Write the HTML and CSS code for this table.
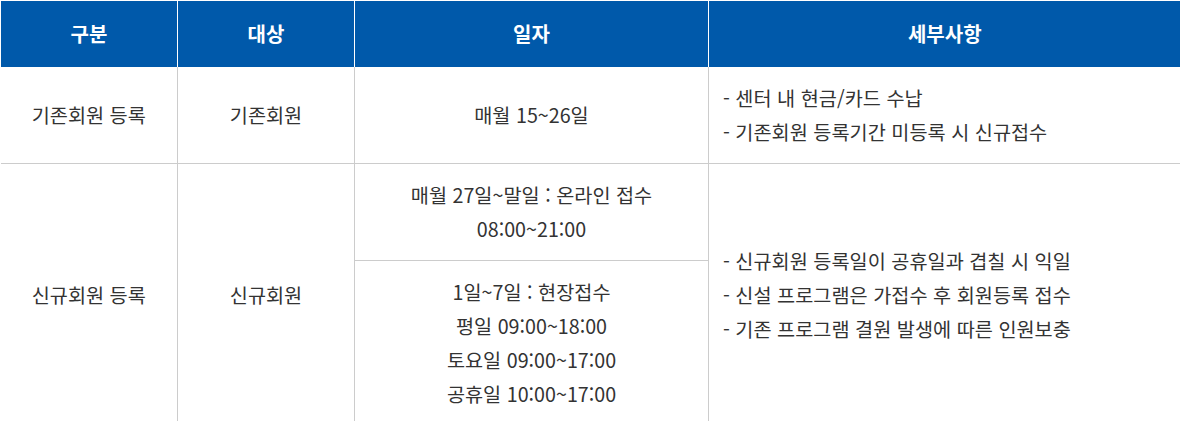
FILE: index.html
```html
<!DOCTYPE html>
<html lang="ko">
<head>
<meta charset="utf-8">
<link rel="stylesheet" href="styles.css">
</head>
<body>
<table class="tbl">
  <colgroup>
    <col class="c1"><col class="c2"><col class="c3"><col class="c4">
  </colgroup>
  <thead>
    <tr><th>구분</th><th>대상</th><th>일자</th><th>세부사항</th></tr>
  </thead>
  <tbody>
    <tr>
      <td>기존회원 등록</td>
      <td>기존회원</td>
      <td>매월 15~26일</td>
      <td class="left">- 센터 내 현금/카드 수납<br>- 기존회원 등록기간 미등록 시 신규접수</td>
    </tr>
    <tr>
      <td rowspan="2">신규회원 등록</td>
      <td rowspan="2">신규회원</td>
      <td>매월 27일~말일 : 온라인 접수<br>08:00~21:00</td>
      <td rowspan="2" class="left">- 신규회원 등록일이 공휴일과 겹칠 시 익일<br>- 신설 프로그램은 가접수 후 회원등록 접수<br>- 기존 프로그램 결원 발생에 따른 인원보충</td>
    </tr>
    <tr>
      <td>1일~7일 : 현장접수<br>평일 09:00~18:00<br>토요일 09:00~17:00<br>공휴일 10:00~17:00</td>
    </tr>
  </tbody>
</table>
</body>
</html>
```

FILE: styles.css
```css
html, body {
  margin: 0;
  padding: 0;
  background: #fff;
}
body {
  font-family: "Noto Sans CJK KR", "Noto Sans", sans-serif;
  color: #333;
}
.tbl {
  width: 1180px;
  border-collapse: collapse;
  table-layout: fixed;
  font-size: 19.7px;
  border-top: 1px solid #fff;
}
.c1, .c2 { width: 177px; }
.c3 { width: 354px; }
.c4 { width: 472px; }
.tbl th {
  background: #0059aa;
  color: #fff;
  font-weight: 700;
  font-size: 20px;
  height: 66px;
  padding: 0;
  border-left: 1px solid #fff;
  line-height: 1;
}
.tbl td {
  border: 1px solid #ccc;
  text-align: center;
  vertical-align: middle;
  padding: 14px 15px;
  line-height: 34px;
}
.tbl td:first-child { border-left: none; }
.tbl td:last-child { border-right: none; }
.tbl tbody tr:first-child td { border-top: none; }
.tbl td.left { text-align: left; padding-left: 14px; }
```
